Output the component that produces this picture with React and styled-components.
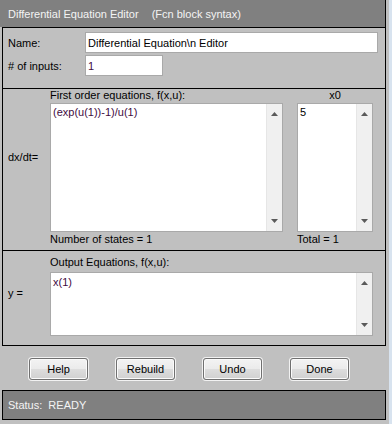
import React from "react";
import styled, { createGlobalStyle } from "styled-components";

const Global = createGlobalStyle`
  html, body { margin: 0; padding: 0; background: #c0c0c0; }
  body { font-family: "Liberation Sans", Arial, sans-serif; font-size: 11px; color: #000; }
  * { box-sizing: border-box; }
`;

const Page = styled.div`
  width: 392px;
  height: 424px;
  display: flex;
  background: #c0c0c0;
  overflow: hidden;
`;

const Main = styled.div`
  width: 389px;
  display: flex;
  flex-direction: column;
`;

const EdgeStrip = styled.div`
  width: 3px;
  background: #d8e3ef;
`;

const TitleBar = styled.div`
  height: 27px;
  width: 386px;
  background: #808080;
  border-right: 1px solid #000;
  color: #f4f4f4;
  display: flex;
  align-items: center;
  padding-left: 8px;
  white-space: pre;
`;

const TitleNote = styled.span`
  margin-left: 13px;
`;

const Frame = styled.div`
  margin-left: 2px;
  width: 384px;
  border: 1px solid #000;
  display: flex;
  flex-direction: column;
`;

const Section = styled.div`
  height: ${(p) => p.$h}px;
  border-bottom: ${(p) => (p.$last ? "none" : "1px solid #000")};
  display: flex;
  box-sizing: content-box;
`;

const NameGrid = styled.div`
  display: grid;
  grid-template-columns: 77px auto;
  grid-auto-rows: 21px;
  row-gap: 2px;
  align-items: center;
  padding: 4px 0 0 5px;
`;

const Label = styled.div`
  line-height: 12px;
  white-space: pre;
`;

const SideLabel = styled.div`
  width: 47px;
  padding-left: 5px;
  margin-top: ${(p) => p.$top}px;
  line-height: 12px;
  white-space: pre;
`;

const Field = styled.div`
  width: ${(p) => p.$w}px;
  height: 21px;
  background: #fff;
  border: 1px solid #a9a9a9;
  padding-left: 2px;
  display: flex;
  align-items: center;
  color: ${(p) => p.$color || "#000"};
  white-space: pre;
`;

const Column = styled.div`
  width: ${(p) => p.$w}px;
  margin-left: ${(p) => p.$ml || 0}px;
  display: flex;
  flex-direction: column;
`;

const Header = styled.div`
  height: ${(p) => p.$h}px;
  padding-top: ${(p) => p.$pt || 0}px;
  line-height: 12px;
  text-align: ${(p) => (p.$center ? "center" : "left")};
`;

const Footer = styled.div`
  height: 13px;
  margin-top: 1px;
  line-height: 13px;
`;

const TextBox = styled.div`
  height: ${(p) => p.$h}px;
  background: #fff;
  border: 1px solid #a9a9a9;
  display: flex;
`;

const TextContent = styled.div`
  flex: 1;
  padding: ${(p) => p.$pt}px 0 0 2px;
  line-height: 12px;
  color: ${(p) => p.$color || "#000"};
  white-space: pre;
`;

const ScrollBar = styled.div`
  width: 16px;
  background: #f0f0f0;
  border-left: 1px solid #e6e6e6;
  display: flex;
  flex-direction: column;
  justify-content: space-between;
`;

const ScrollButton = styled.div`
  height: 17px;
  display: flex;
  align-items: center;
  justify-content: center;
  padding-top: ${(p) => (p.$down ? 0 : 3)}px;
  padding-bottom: ${(p) => (p.$down ? 3 : 0)}px;
`;

const Arrow = ({ down }) => (
  <svg width="7" height="4" viewBox="0 0 7 4">
    {down ? (
      <polygon points="0,0 7,0 3.5,4" fill="#5a5a5a" />
    ) : (
      <polygon points="3.5,0 7,4 0,4" fill="#5a5a5a" />
    )}
  </svg>
);

const Scroll = () => (
  <ScrollBar>
    <ScrollButton>
      <Arrow />
    </ScrollButton>
    <ScrollButton $down>
      <Arrow down />
    </ScrollButton>
  </ScrollBar>
);

const ButtonRow = styled.div`
  height: 44px;
  display: flex;
  align-items: flex-start;
  gap: 28px;
  padding: 12px 0 0 29px;
`;

const Button = styled.button`
  width: 59px;
  height: 22px;
  padding: 0;
  font: inherit;
  color: #000;
  border: 1px solid #707070;
  border-radius: 3px;
  background: linear-gradient(#f3f3f3 0%, #ebebeb 48%, #dddddd 52%, #d0d0d0 100%);
  box-shadow: 0 0 0 1px #f2f2f2, inset 0 0 0 1px #fbfbfb;
  display: flex;
  align-items: center;
  justify-content: center;
`;

const StatusBar = styled.div`
  margin-left: 2px;
  width: 384px;
  height: 30px;
  background: #808080;
  border: 1px solid #000;
  color: #f4f4f4;
  display: flex;
  align-items: center;
  padding-left: 5px;
  white-space: pre;
`;

const EQ_COLOR = "#3f0c3f";

export default function App() {
  return (
    <Page>
      <Global />
      <Main>
        <TitleBar>
          Differential Equation Editor
          <TitleNote>(Fcn block syntax)</TitleNote>
        </TitleBar>
        <Frame>
          <Section $h={60}>
            <NameGrid>
              <Label>Name:</Label>
              <Field $w={293}>Differential Equation\n Editor</Field>
              <Label># of inputs:</Label>
              <Field $w={78} $color={EQ_COLOR}>1</Field>
            </NameGrid>
          </Section>
          <Section $h={161}>
            <SideLabel $top={62}>dx/dt=</SideLabel>
            <Column $w={233}>
              <Header $h={14}>First order equations, f(x,u):</Header>
              <TextBox $h={129}>
                <TextContent $pt={2} $color={EQ_COLOR}>(exp(u(1))-1)/u(1)</TextContent>
                <Scroll />
              </TextBox>
              <Footer>Number of states = 1</Footer>
            </Column>
            <Column $w={76} $ml={14}>
              <Header $h={14} $center>x0</Header>
              <TextBox $h={129}>
                <TextContent $pt={2}>5</TextContent>
                <Scroll />
              </TextBox>
              <Footer>Total = 1</Footer>
            </Column>
          </Section>
          <Section $h={94} $last>
            <SideLabel $top={36}>y =</SideLabel>
            <Column $w={323}>
              <Header $h={21} $pt={5}>Output Equations, f(x,u):</Header>
              <TextBox $h={64}>
                <TextContent $pt={3} $color={EQ_COLOR}>x(1)</TextContent>
                <Scroll />
              </TextBox>
            </Column>
          </Section>
        </Frame>
        <ButtonRow>
          <Button>Help</Button>
          <Button>Rebuild</Button>
          <Button>Undo</Button>
          <Button>Done</Button>
        </ButtonRow>
        <StatusBar>Status:  READY</StatusBar>
      </Main>
      <EdgeStrip />
    </Page>
  );
}
